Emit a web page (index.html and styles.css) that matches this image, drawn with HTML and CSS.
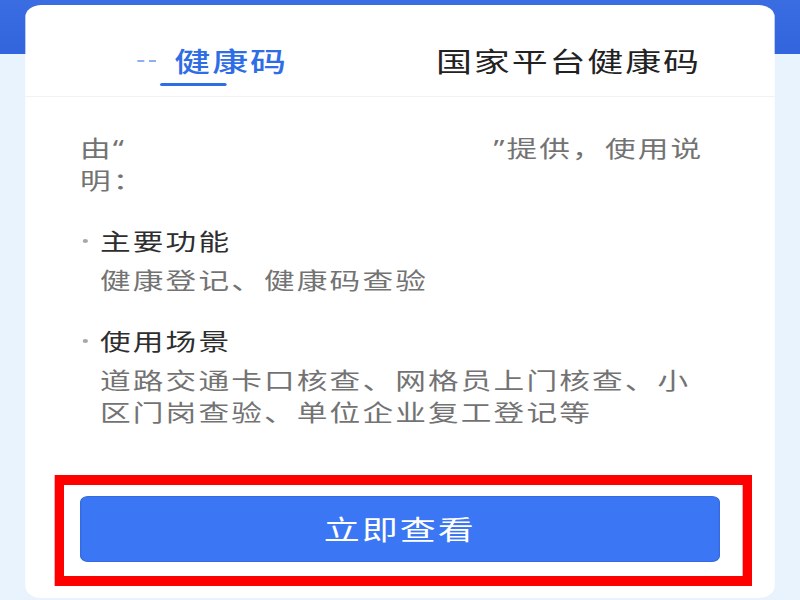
FILE: index.html
```html
<!DOCTYPE html>
<html lang="zh-CN">
<head>
<meta charset="utf-8">
<title>健康码</title>
<link rel="stylesheet" href="styles.css">
</head>
<body>
<div class="screen">
  <div class="card">
    <div class="tabs">
      <div class="tab tab-active">
        <div class="tab-label"><span class="ghost"><i></i></span>健康码</div>
        <div class="tab-line"></div>
      </div>
      <div class="tab">
        <div class="tab-label">国家平台健康码</div>
      </div>
    </div>
    <div class="content">
      <p class="intro">由“ ”提供，使用说明：</p>
      <div class="section">
        <div class="heading"><span class="dot"></span>主要功能</div>
        <div class="desc">健康登记、健康码查验</div>
      </div>
      <div class="section">
        <div class="heading"><span class="dot"></span>使用场景</div>
        <div class="desc">道路交通卡口核查、网格员上门核查、小区门岗查验、单位企业复工登记等</div>
      </div>
    </div>
    <div class="highlight">
      <button class="btn" type="button">立即查看</button>
    </div>
  </div>
</div>
</body>
</html>
```
FILE: styles.css
```css
html, body {
  margin: 0;
  padding: 0;
  width: 800px;
  height: 600px;
  overflow: hidden;
  background: #e9f3fe;
}

.screen {
  width: 600px;
  height: 600px;
  box-sizing: border-box;
  padding: 5px 18.75px 0;
  transform: scaleX(1.33333);
  transform-origin: 0 0;
  background: linear-gradient(180deg, #3a6de2 0%, #3264dd 100%) top left / 100% 54px no-repeat, #e9f3fe;
  font-family: "Noto Sans", "Noto Sans CJK SC", sans-serif;
}

.card {
  height: 593px;
  background: #fff;
  border-radius: 12px;
  display: flex;
  flex-direction: column;
}

.tabs {
  display: flex;
  justify-content: space-around;
  align-items: flex-start;
  padding: 39px 0 10px;
  border-bottom: 1px solid #f1f2f4;
}

.tab {
  display: flex;
  flex-direction: column;
  align-items: center;
}

.tab-label {
  font-size: 27px;
  line-height: 36px;
  letter-spacing: 1.4px;
  color: #222;
  display: flex;
  align-items: center;
}

.tab-active .tab-label {
  color: #2f6de6;
  font-weight: 500;
}

.ghost {
  width: 56.5px;
  height: 36px;
  box-sizing: border-box;
  padding: 0 13.5px 3px 0;
  display: flex;
  justify-content: flex-end;
  align-items: center;
}

.ghost i {
  width: 14px;
  border-top: 2px dashed #8fb0ee;
}

.tab-line {
  width: 50px;
  height: 3px;
  margin-top: 3px;
  border-radius: 2px;
  background: #2f6de6;
}

.content {
  padding: 35px 46px 0 41.25px;
  font-size: 23px;
  line-height: 32px;
  letter-spacing: 1.6px;
}

.intro {
  margin: 0;
  color: #737373;
  word-spacing: 268px;
}

.section {
  margin-top: 29px;
}

.heading {
  display: flex;
  align-items: center;
  color: #2e2e2e;
}

.dot {
  width: 4px;
  height: 4px;
  border-radius: 50%;
  background: #a8a8a8;
  margin: 0 9.5px 0 1.5px;
}

.desc {
  margin-top: 7px;
  padding-left: 15px;
  color: #737373;
}

.highlight {
  margin: 47px 17.25px 0 21.75px;
  border: 10px solid #ff0000;
  border-left-width: 7.1px;
  border-right-width: 7.1px;
  padding: 10.5px 17px 14.5px 12px;
  background: #fff;
}

.btn {
  display: block;
  width: 100%;
  height: 66px;
  border: 1px solid #356ae0;
  border-radius: 6px;
  background: #3b76f4;
  color: #fff;
  font-family: "Noto Sans CJK SC", sans-serif;
  font-size: 27px;
  letter-spacing: 1.5px;
  padding: 0;
}
```
